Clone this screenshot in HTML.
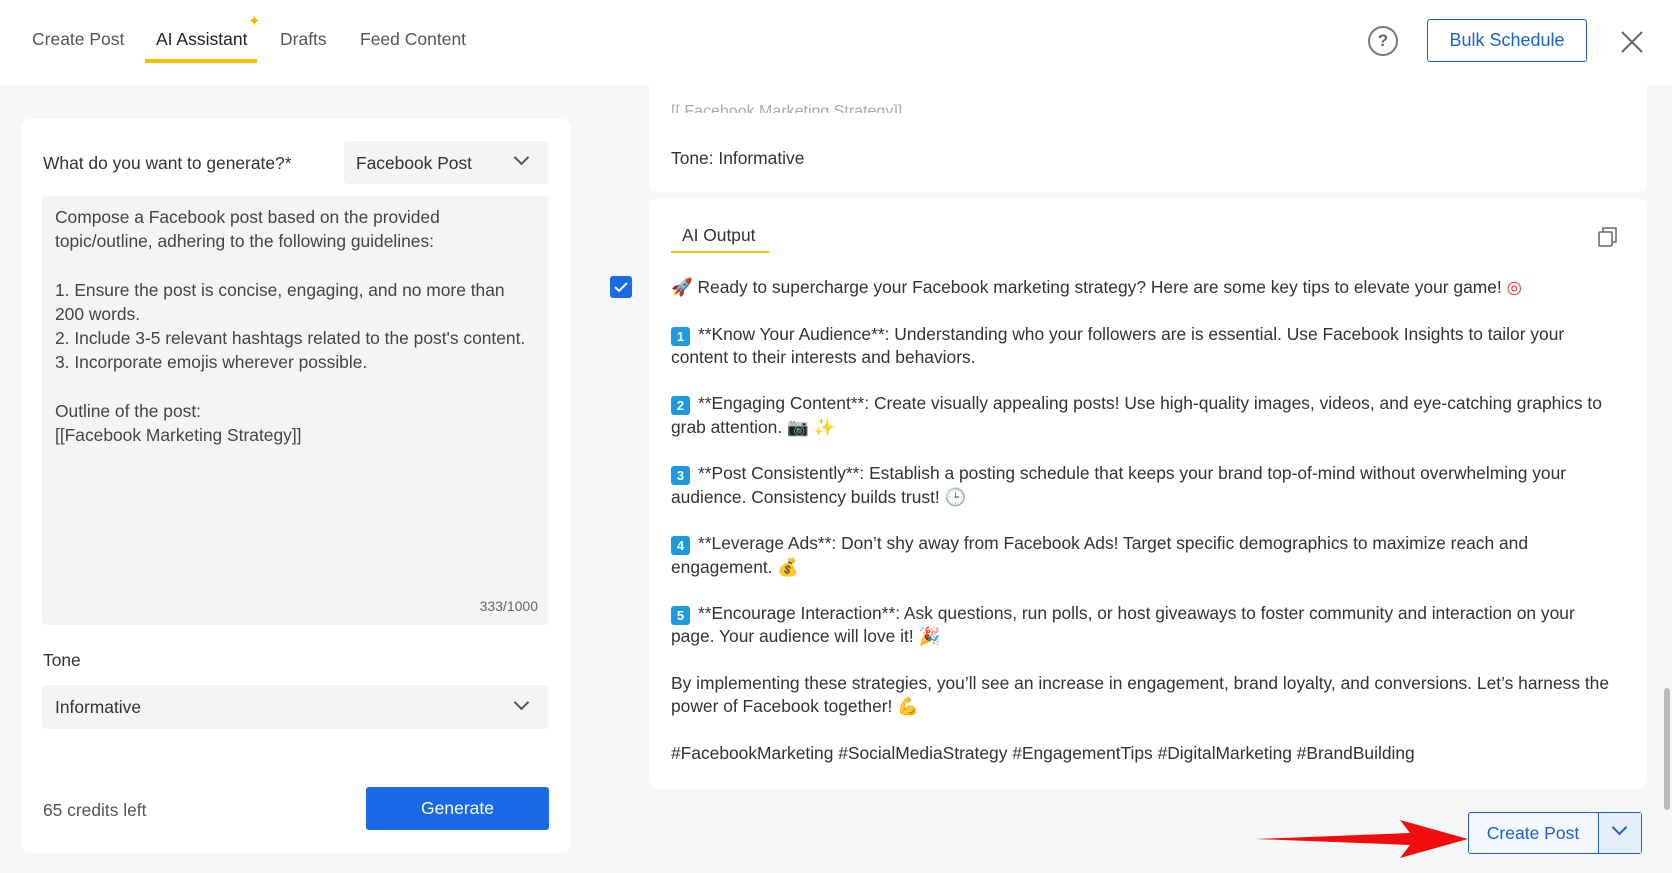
<!DOCTYPE html>
<html><head><meta charset="utf-8"><style>
*{box-sizing:border-box;margin:0;padding:0}
body{width:1672px;height:873px;overflow:hidden;background:#f5f7f9;font-family:"Liberation Sans",sans-serif;color:#333;position:relative}
.abs{position:absolute}
.hdr{left:0;top:0;width:1672px;height:85px;background:#fff}
.tab{top:29px;font-size:17.5px;color:#555;white-space:nowrap}
.card{background:#fff;border-radius:8px}
.sel{background:#f3f4f5;border-radius:4px}
.chev{position:absolute;width:11px;height:11px;border-right:2px solid #555;border-bottom:2px solid #555;transform:rotate(45deg)}
.out{left:671px;top:276px;width:948px;font-size:17.4px;line-height:23.3px;color:#333}
.out p{margin-bottom:23.3px}
.n{display:inline-block;width:19px;height:19px;background:#1e9be0;color:#fff;font-size:13px;line-height:19px;text-align:center;border-radius:3px;font-weight:bold;vertical-align:-1px;margin-right:8px}
</style></head><body>
<div class="abs hdr"></div>
<div class="abs tab" style="left:32px">Create Post</div>
<div class="abs tab" style="left:156px;color:#222">AI Assistant</div>
<div class="abs" style="left:248px;top:12px;color:#f5b800;font-size:15px">✦</div>
<div class="abs tab" style="left:280px">Drafts</div>
<div class="abs tab" style="left:360px">Feed Content</div>
<div class="abs" style="left:145px;top:59px;width:112px;height:4px;background:#f5c000"></div>
<div class="abs" style="left:1368px;top:26px;width:30px;height:30px;border:2px solid #777;border-radius:50%;text-align:center;font-size:17px;line-height:26px;font-weight:bold;color:#666">?</div>
<div class="abs" style="left:1427px;top:19px;width:160px;height:43px;border:1.5px solid #1a62c9;border-radius:3px;color:#1a62c9;font-size:18px;text-align:center;line-height:40px">Bulk Schedule</div>
<svg class="abs" style="left:1620px;top:30px" width="24" height="24"><path d="M2 2L22 22M22 2L2 22" stroke="#666" stroke-width="2"/></svg>

<div class="abs card" style="left:21px;top:119px;width:550px;height:734px"></div>
<div class="abs" style="left:43px;top:153px;font-size:17.4px;color:#333">What do you want to generate?*</div>
<div class="abs sel" style="left:344px;top:141px;width:205px;height:43px"><span style="position:absolute;left:12px;top:12px;font-size:17.4px">Facebook Post</span><div class="chev" style="left:172px;top:11px"></div></div>
<div class="abs sel" style="left:42px;top:196px;width:507px;height:429px"></div>
<div class="abs" style="left:55px;top:205px;width:480px;font-size:17.4px;line-height:24.2px;color:#444">Compose a Facebook post based on the provided topic/outline, adhering to the following guidelines:<br><br>1. Ensure the post is concise, engaging, and no more than 200 words.<br>2. Include 3-5 relevant hashtags related to the post's content.<br>3. Incorporate emojis wherever possible.<br><br>Outline of the post:<br>[[Facebook Marketing Strategy]]</div>
<div class="abs" style="left:470px;top:598px;width:68px;text-align:right;font-size:14px;color:#666">333/1000</div>
<div class="abs" style="left:43px;top:650px;font-size:17.4px">Tone</div>
<div class="abs sel" style="left:42px;top:685px;width:507px;height:44px"><span style="position:absolute;left:13px;top:12px;font-size:17.4px">Informative</span><div class="chev" style="left:474px;top:12px"></div></div>
<div class="abs" style="left:43px;top:800px;font-size:17.4px;color:#555">65 credits left</div>
<div class="abs" style="left:366px;top:787px;width:183px;height:43px;background:#1a6ae8;border-radius:3px;color:#fff;font-size:17.5px;text-align:center;line-height:43px">Generate</div>

<div class="abs card" style="left:649px;top:85px;width:998px;height:107px;border-radius:0 0 8px 8px"></div>
<div class="abs" style="left:671px;top:103px;font-size:16px;color:#aaa;height:10px;overflow:hidden">[[ Facebook Marketing Strategy]]</div>
<div class="abs" style="left:671px;top:148px;font-size:17.4px">Tone: Informative</div>

<div class="abs card" style="left:649px;top:198px;width:998px;height:591px"></div>
<div class="abs" style="left:682px;top:225px;font-size:17.4px">AI Output</div>
<div class="abs" style="left:671px;top:251px;width:98px;height:2px;background:#f5c000"></div>
<svg class="abs" style="left:1597px;top:226px" width="22" height="22"><rect x="2" y="6" width="13" height="14" rx="1" fill="none" stroke="#666" stroke-width="1.5"/><path d="M6 6V2h13v14h-4" fill="none" stroke="#666" stroke-width="1.5"/></svg>
<div class="abs" style="left:610px;top:276px;width:22px;height:22px;background:#1a6ae8;border-radius:3px"><svg width="22" height="22"><path d="M5 11l4 4 8-8" stroke="#fff" stroke-width="2" fill="none"/></svg></div>
<div class="abs out">
<p><span style="color:#e04">🚀</span> Ready to supercharge your Facebook marketing strategy? Here are some key tips to elevate your game! <span style="color:#e33">◎</span></p>
<p><span class="n">1</span>**Know Your Audience**: Understanding who your followers are is essential. Use Facebook Insights to tailor your content to their interests and behaviors.</p>
<p><span class="n">2</span>**Engaging Content**: Create visually appealing posts! Use high-quality images, videos, and eye-catching graphics to grab attention. 📷 <span style="color:#f5b800">✨</span></p>
<p><span class="n">3</span>**Post Consistently**: Establish a posting schedule that keeps your brand top-of-mind without overwhelming your audience. Consistency builds trust! 🕒</p>
<p><span class="n">4</span>**Leverage Ads**: Don’t shy away from Facebook Ads! Target specific demographics to maximize reach and engagement. <span style="color:#c90">💰</span></p>
<p><span class="n">5</span>**Encourage Interaction**: Ask questions, run polls, or host giveaways to foster community and interaction on your page. Your audience will love it! 🎉</p>
<p>By implementing these strategies, you’ll see an increase in engagement, brand loyalty, and conversions. Let’s harness the power of Facebook together! <span style="color:#e9a800">💪</span></p>
<p>#FacebookMarketing #SocialMediaStrategy #EngagementTips #DigitalMarketing #BrandBuilding</p>
</div>
<div class="abs" style="left:1664px;top:688px;width:6px;height:122px;background:#bbb;border-radius:3px"></div>

<svg class="abs" style="left:1250px;top:815px" width="222" height="48"><path d="M6 24L160 18L150 5L218 24L150 43L160 30Z" fill="#f20d0d"/></svg>
<div class="abs" style="left:1468px;top:812px;width:174px;height:42px;border:1.5px solid #1a62c9;border-radius:3px;background:#f4f8fe"></div>
<div class="abs" style="left:1598px;top:813px;width:43px;height:40px;background:#e6effc;border-left:1.5px solid #1a62c9"></div>
<div class="abs" style="left:1468px;top:823px;width:130px;text-align:center;font-size:17.5px;color:#1a62c9">Create Post</div>
<div class="chev" style="left:1614px;top:822px;border-color:#1a62c9;border-width:2.5px"></div>
</body></html>
